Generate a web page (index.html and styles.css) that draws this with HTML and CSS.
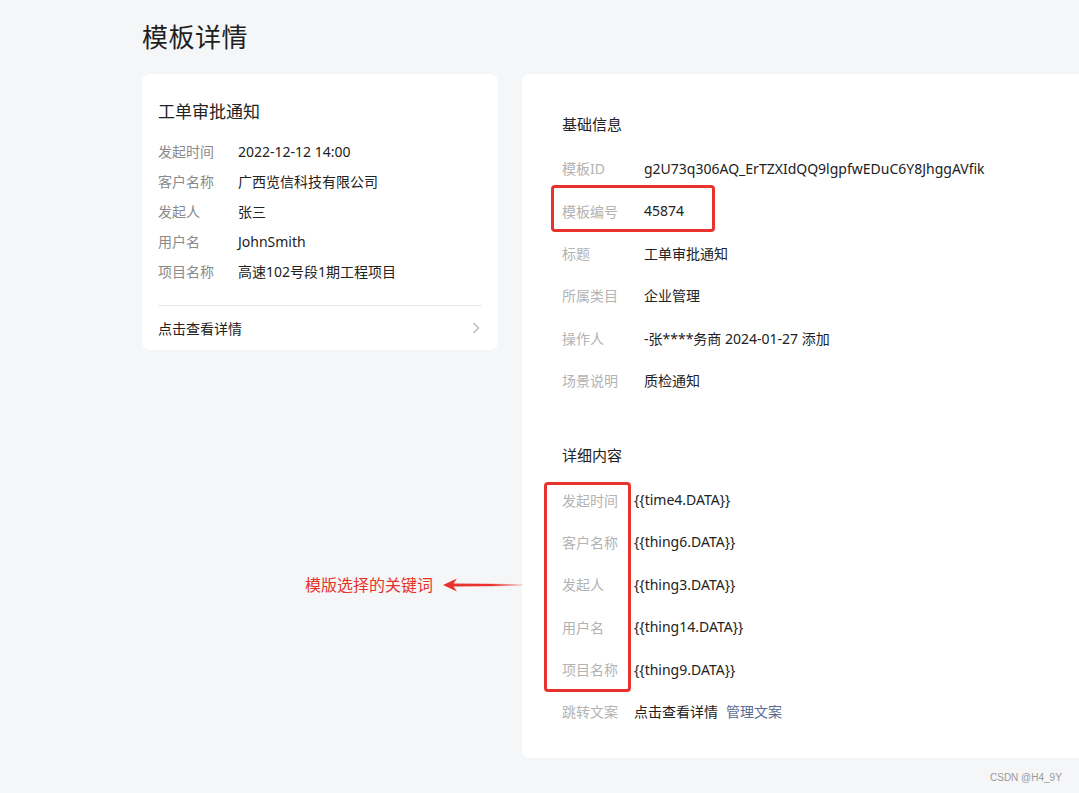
FILE: index.html
```html
<!DOCTYPE html>
<html lang="zh-CN">
<head>
<meta charset="utf-8">
<title>模板详情</title>
<link rel="stylesheet" href="styles.css">
</head>
<body>
<div class="page">
  <h1 class="page-title">模板详情</h1>
  <div class="layout">
    <div class="side">
      <div class="preview-card">
        <div class="preview-title">工单审批通知</div>
        <div class="preview-rows">
          <div class="prow"><span class="plabel">发起时间</span><span class="pvalue">2022-12-12 14:00</span></div>
          <div class="prow"><span class="plabel">客户名称</span><span class="pvalue">广西览信科技有限公司</span></div>
          <div class="prow"><span class="plabel">发起人</span><span class="pvalue">张三</span></div>
          <div class="prow"><span class="plabel">用户名</span><span class="pvalue">JohnSmith</span></div>
          <div class="prow"><span class="plabel">项目名称</span><span class="pvalue">高速102号段1期工程项目</span></div>
        </div>
        <div class="preview-footer">
          <span>点击查看详情</span>
          <svg class="chev" width="8" height="12" viewBox="0 0 8 12"><path d="M1.5 1 L6.5 6 L1.5 11" fill="none" stroke="#b8b8b8" stroke-width="1.3"/></svg>
        </div>
      </div>
      <div class="annotation">
        <span class="anno-text">模版选择的关键词</span>
        <svg class="anno-arrow" width="80" height="14" viewBox="0 0 80 14">
          <defs>
            <linearGradient id="fade" x1="0" x2="1" y1="0" y2="0">
              <stop offset="0" stop-color="#e8332c"/>
              <stop offset="0.6" stop-color="#e8332c"/>
              <stop offset="1" stop-color="#e8332c" stop-opacity="0.1"/>
            </linearGradient>
          </defs>
          <path d="M0 7 L14 0.5 L10.5 5.5 L80 6 L80 8 L10.5 8.5 L14 13.5 Z" fill="url(#fade)"/>
        </svg>
      </div>
    </div>
    <div class="detail-card">
      <section class="section">
        <h2 class="section-title">基础信息</h2>
        <div class="rows">
          <div class="row"><span class="label">模板ID</span><span class="value">g2U73q306AQ_ErTZXIdQQ9lgpfwEDuC6Y8JhggAVfik</span></div>
          <div class="row"><span class="label">模板编号</span><span class="value">45874</span></div>
          <div class="row"><span class="label">标题</span><span class="value">工单审批通知</span></div>
          <div class="row"><span class="label">所属类目</span><span class="value">企业管理</span></div>
          <div class="row"><span class="label">操作人</span><span class="value">-张****务商 2024-01-27 添加</span></div>
          <div class="row"><span class="label">场景说明</span><span class="value">质检通知</span></div>
          <div class="mark mark-id"></div>
        </div>
      </section>
      <section class="section section-detail">
        <h2 class="section-title">详细内容</h2>
        <div class="rows">
          <div class="row narrow"><span class="label">发起时间</span><span class="value">{{time4.DATA}}</span></div>
          <div class="row narrow"><span class="label">客户名称</span><span class="value">{{thing6.DATA}}</span></div>
          <div class="row narrow"><span class="label">发起人</span><span class="value">{{thing3.DATA}}</span></div>
          <div class="row narrow"><span class="label">用户名</span><span class="value">{{thing14.DATA}}</span></div>
          <div class="row narrow"><span class="label">项目名称</span><span class="value">{{thing9.DATA}}</span></div>
          <div class="row narrow"><span class="label">跳转文案</span><span class="value">点击查看详情<a class="link">管理文案</a></span></div>
          <div class="mark mark-keys"></div>
        </div>
      </section>
    </div>
  </div>
</div>
<div class="watermark">CSDN @H4_9Y</div>
</body>
</html>
```

FILE: styles.css
```css
* { box-sizing: border-box; }
html, body {
  margin: 0;
  padding: 0;
  background: #f5f6f8;
  overflow: hidden;
  height: 100%;
}
body {
  font-family: "Noto Sans", "Noto Sans CJK SC", sans-serif;
  color: #222;
  position: relative;
}
.page {
  padding-left: 142px;
  padding-top: 19px;
}
.page-title {
  margin: 0;
  font-size: 26px;
  font-weight: 400;
  line-height: 36px;
  color: #1f1f1f;
  letter-spacing: 0.5px;
}
.layout {
  display: flex;
  gap: 24px;
  margin-top: 19px;
  align-items: flex-start;
}
.side {
  width: 356px;
  flex: none;
  position: relative;
}
.preview-card {
  background: #fff;
  border-radius: 8px;
  padding: 26px 16px 0;
}
.preview-title {
  font-size: 17px;
  line-height: 24px;
  color: #222;
}
.preview-rows {
  margin-top: 12px;
  padding-bottom: 19px;
  border-bottom: 1px solid #e6e6e6;
}
.prow {
  display: flex;
  height: 30px;
  align-items: center;
  font-size: 14px;
}
.plabel {
  width: 80px;
  color: #8a8a8a;
}
.pvalue { color: #222; }
.preview-footer {
  height: 44px;
  display: flex;
  align-items: center;
  justify-content: space-between;
  font-size: 14px;
  color: #222;
  padding-right: 2px;
}
.annotation {
  position: absolute;
  left: 163px;
  top: 500px;
  display: flex;
  align-items: center;
  gap: 10px;
}
.anno-text {
  color: #e8332c;
  font-size: 16px;
  line-height: 22px;
  white-space: nowrap;
}
.anno-arrow { display: block; }
.detail-card {
  width: 600px;
  flex: none;
  background: #fff;
  border-radius: 8px 0 0 8px;
  padding: 38px 40px 25px;
}
.section-title {
  margin: 0;
  font-size: 15px;
  font-weight: 400;
  line-height: 24px;
  color: #222;
}
.section-detail { margin-top: 42px; }
.rows {
  margin-top: 11px;
  position: relative;
}
.section-detail .rows { margin-top: 11px; }
.row {
  display: flex;
  align-items: center;
  height: 42.4px;
  font-size: 14px;
}
.label {
  width: 82px;
  flex: none;
  color: #b3b3b3;
}
.row.narrow .label { width: 72px; }
.value {
  color: #222;
  white-space: nowrap;
}
.link {
  color: #5a6a94;
  margin-left: 8px;
}
.mark {
  position: absolute;
  border: 3px solid #e8332c;
  border-radius: 4px;
}
.mark-id {
  left: -11px;
  top: 38px;
  width: 164px;
  height: 47px;
}
.mark-keys {
  left: -18px;
  top: 4px;
  width: 87px;
  height: 210px;
}
.watermark {
  position: absolute;
  left: 990px;
  top: 771px;
  font-size: 10px;
  line-height: 14px;
  color: #9a9a9a;
  font-family: "Liberation Sans", sans-serif;
}
```
